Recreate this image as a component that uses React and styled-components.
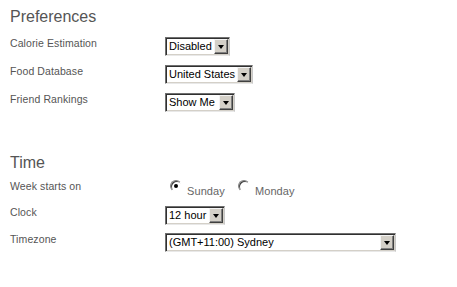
import React from "react";
import styled, { createGlobalStyle } from "styled-components";

const Global = createGlobalStyle`
  html, body { margin: 0; padding: 0; background: #fff; }
  body { font-family: Arial, "Liberation Sans", sans-serif; }
`;

const Page = styled.div`
  padding: 7px 0 0 10px;
  width: 457px;
  height: 287px;
  box-sizing: border-box;
`;

const Section = styled.section`
  margin-bottom: ${(p) => p.$mb || 0}px;
`;

const Heading = styled.h2`
  margin: 0 0 ${(p) => p.$mb}px 0;
  font-family: Arial, "Liberation Sans", sans-serif;
  font-weight: normal;
  font-size: 16px;
  line-height: 20px;
  color: #555;
`;

const Rows = styled.div`
  display: grid;
  grid-template-columns: 155px 1fr;
  row-gap: ${(p) => p.$gap}px;
  align-items: start;
`;

const Label = styled.div`
  font-family: Arial, "Liberation Sans", sans-serif;
  font-size: 10.5px;
  line-height: 13px;
  color: #555;
  letter-spacing: 0.1px;
`;

const Select = styled.div`
  display: flex;
  width: ${(p) => p.$w}px;
  height: 19px;
  box-sizing: border-box;
  border-style: solid;
  border-width: 1px;
  border-color: #707070 #c8c8c8 #e8e8e8 #707070;
  box-shadow: inset 1px 1px 0 #303030, inset -1px -1px 0 #d4d0c8;
  background: #fff;
  padding: 1px;
`;

const SelectText = styled.span`
  flex: 1;
  font-family: Arial, "Liberation Sans", sans-serif;
  font-size: 11px;
  line-height: 15px;
  color: #000;
  padding-left: 2px;
  white-space: nowrap;
  overflow: hidden;
`;

const ArrowButton = styled.span`
  flex: 0 0 14px;
  box-sizing: border-box;
  background: #d4d0c8;
  border-style: solid;
  border-width: 1px;
  border-color: #f4f4f4 #404040 #404040 #f4f4f4;
  box-shadow: inset -1px -1px 0 #808080;
  display: flex;
  align-items: center;
  justify-content: center;
  &::after {
    content: "";
    width: 0;
    height: 0;
    border-left: 3.5px solid transparent;
    border-right: 3.5px solid transparent;
    border-top: 4px solid #000;
    margin: 1px 1px 0 0;
  }
`;

const RadioGroup = styled.div`
  display: flex;
  align-items: flex-start;
  padding: 0 0 0 5px;
`;

const RadioItem = styled.label`
  display: flex;
  align-items: flex-start;
  margin-right: ${(p) => p.$mr || 0}px;
`;

const RadioDot = styled.span`
  width: 12px;
  height: 12px;
  box-sizing: border-box;
  border-radius: 50%;
  border: 1px solid;
  border-color: #808080 #fff #fff #808080;
  box-shadow: inset 1px 1px 0 #404040;
  position: relative;
  &::after {
    content: "";
    display: ${(p) => (p.$checked ? "block" : "none")};
    position: absolute;
    left: 3px;
    top: 3px;
    width: 4px;
    height: 4px;
    border-radius: 50%;
    background: #000;
  }
`;

const RadioText = styled.span`
  font-family: Arial, "Liberation Sans", sans-serif;
  font-size: 11px;
  line-height: 13px;
  color: #666;
  margin: 5px 0 0 5px;
  letter-spacing: 0.1px;
`;

const Dropdown = ({ w, value }) => (
  <Select $w={w}>
    <SelectText>{value}</SelectText>
    <ArrowButton />
  </Select>
);

export default function App() {
  return (
    <Page>
      <Global />
      <Section $mb={41}>
        <Heading $mb={10}>Preferences</Heading>
        <Rows $gap={9}>
          <Label>Calorie Estimation</Label>
          <Dropdown w={65} value="Disabled" />
          <Label>Food Database</Label>
          <Dropdown w={88} value="United States" />
          <Label>Friend Rankings</Label>
          <Dropdown w={70} value="Show Me" />
        </Rows>
      </Section>
      <Section>
        <Heading $mb={7}>Time</Heading>
        <Rows $gap={8}>
          <Label>Week starts on</Label>
          <RadioGroup>
            <RadioItem $mr={13}>
              <RadioDot $checked />
              <RadioText>Sunday</RadioText>
            </RadioItem>
            <RadioItem>
              <RadioDot />
              <RadioText>Monday</RadioText>
            </RadioItem>
          </RadioGroup>
          <Label>Clock</Label>
          <Dropdown w={60} value="12 hour" />
          <Label>Timezone</Label>
          <Dropdown w={231} value="(GMT+11:00) Sydney" />
        </Rows>
      </Section>
    </Page>
  );
}
